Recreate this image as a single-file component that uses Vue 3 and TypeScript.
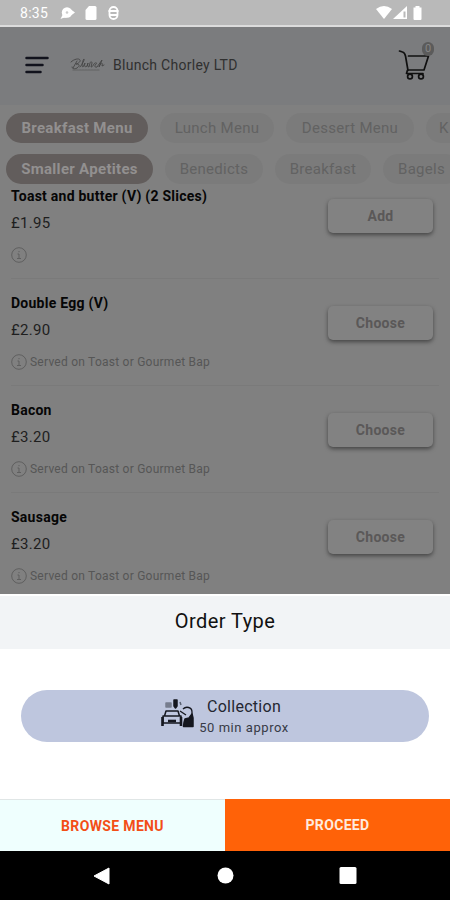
<script setup lang="ts">
interface Chip { label: string; width: number; active?: boolean; start?: boolean }
interface MenuItem { name: string; price: string; note: string; action: string }

const menus: Chip[] = [
  { label: 'Breakfast Menu', width: 142, active: true },
  { label: 'Lunch Menu', width: 114 },
  { label: 'Dessert Menu', width: 128 },
  { label: 'K', width: 108, start: true },
]
const categories: Chip[] = [
  { label: 'Smaller Apetites', width: 147, active: true },
  { label: 'Benedicts', width: 98 },
  { label: 'Breakfast', width: 96 },
  { label: 'Bagels', width: 77 },
]
const items: MenuItem[] = [
  { name: 'Toast and butter (V) (2 Slices)', price: '£1.95', note: '', action: 'Add' },
  { name: 'Double Egg (V)', price: '£2.90', note: 'Served on Toast or Gourmet Bap', action: 'Choose' },
  { name: 'Bacon', price: '£3.20', note: 'Served on Toast or Gourmet Bap', action: 'Choose' },
  { name: 'Sausage', price: '£3.20', note: 'Served on Toast or Gourmet Bap', action: 'Choose' },
]
</script>

<template>
  <div class="phone">
    <div class="status">
      <span class="time">8:35</span>
      <svg class="status-left" width="62" height="16" viewBox="0 0 62 16" fill="#fff">
        <circle cx="7" cy="7.500" r="5.200" /><path d="M.5 14l2.500-5 4 3.500-4 .5zM11 4.500l4 3-4 3z" />
        <circle cx="7" cy="7.500" r="1.300" fill="#ccc" />
        <path d="M29 1h6a1.500 1.500 0 0 1 1.500 1.500v11a1.500 1.500 0 0 1-1.500 1.500h-8a1.500 1.500 0 0 1-1.500-1.500V5z" />
        <g fill="none" stroke="#fff" stroke-width="1.800"><rect x="49.500" y="2" width="8" height="12" rx="4" /><path d="M48.500 6h10M49.500 10h8" /></g>
      </svg>
      <svg class="status-right" width="48" height="16" viewBox="0 0 48 16" fill="#fff">
        <path d="M0 4Q8-2 16 4L8 14z" /><path d="M31 1v13H17z" /><path d="M27.500 6.500h2v6h-2z" fill="#b9b9b9" />
        <path d="M39.500 1h4v1.500h2V14a1 1 0 0 1-1 1h-6a1 1 0 0 1-1-1V2.500h2z" />
      </svg>
    </div>

    <header class="header">
      <svg class="burger" width="24" height="18" viewBox="0 0 24 18">
        <path d="M1.500 2h21M1.500 9h16M1.500 16h14" stroke="#11121c" stroke-width="2.500" stroke-linecap="round" />
      </svg>
      <svg class="logo" width="36" height="16" viewBox="0 0 36 16" fill="none" stroke="#454545" stroke-width=".9" stroke-linecap="round">
        <path d="M2 5C5 2 10 1 11 3s-3 4-4 4c4 0 4 2 1 4s-5 0-5-1M8 4L4 11M11 10c2-2 5-8 4-8s-3 8-1 8l2-4c-1 3 0 5 2 3l1-3c-1 3 0 4 1 4l1-4c0-1 2-2 2 0l-1 4c1 0 2-1 3-3 1-2 4-1 2 0-2 2-1 4 1 3l5-7-3 7c2-5 4-5 3-1l2-1" />
        <path d="M4 13h27" stroke-dasharray="2 1" stroke-width="1.200" stroke="#626262" />
      </svg>
      <span class="shop">Blunch Chorley LTD</span>
      <div class="cart">
        <svg width="34" height="34" viewBox="0 0 34 34" fill="none" stroke="#101010" stroke-width="1.700" stroke-linecap="round" stroke-linejoin="round">
          <path d="M1.500 3l3 1c2 .5 2.500 2 3 4L10 22.500M10.500 8H30.500l-4.500 14H9.500L8.500 25.500H25" />
          <circle cx="12" cy="28.500" r="2.400" /><circle cx="23" cy="28.500" r="2.400" />
        </svg>
        <span class="badge">0</span>
      </div>
    </header>

    <main class="content">
      <nav class="chips">
        <span v-for="c in menus" :key="c.label" class="chip" :class="{ active: c.active, start: c.start }" :style="{ width: c.width + 'px' }">{{ c.label }}</span>
      </nav>
      <nav class="chips second">
        <span v-for="c in categories" :key="c.label" class="chip" :class="{ active: c.active }" :style="{ width: c.width + 'px' }">{{ c.label }}</span>
      </nav>
      <section class="list">
        <article v-for="item in items" :key="item.name" class="item">
          <div class="info">
            <h3>{{ item.name }}</h3>
            <div class="price">{{ item.price }}</div>
            <div class="note">
              <svg width="16" height="16" viewBox="0 0 16 16" fill="none" stroke="#5f5f5f">
                <circle cx="8" cy="8" r="7.300" /><path d="M6.500 7H8v4.500M6 11.500h4M8 4v1.200" />
              </svg>
              <span>{{ item.note }}</span>
            </div>
          </div>
          <button class="action">{{ item.action }}</button>
        </article>
      </section>
    </main>

    <section class="sheet">
      <h2>Order Type</h2>
      <div class="options">
        <button class="option">
          <svg width="34" height="32" viewBox="0 0 34 32" fill="none" stroke="#15171f" stroke-width="1.500" stroke-linejoin="round">
            <path d="M3.500 18l1.500-5h12l1.500 5M2 18h18v7H2z" />
            <path d="M1.500 19v9M20 19v9" stroke-width="2.600" />
            <path d="M7 23h8" stroke-width="2.600" />
            <path d="M5 5h5v4H5z" fill="#777d8e" stroke="#777d8e" />
            <path d="M13 2h3v6l-1.500 2L13 8z" fill="#15171f" /><path d="M19 4l1 3" stroke="#596071" />
            <path d="M19 13l6 4M22 11c3-3 9-2 9 3v14" stroke-width="1.300" />
            <path d="M24 21l4-1 3-4 1 4v8.500h-9.500l.5-4z" fill="#15171f" />
          </svg>
          <span class="option-text"><span class="kind">Collection</span><span class="eta">50 min approx</span></span>
        </button>
      </div>
      <div class="buttons">
        <button class="browse">BROWSE MENU</button>
        <button class="proceed">PROCEED</button>
      </div>
    </section>

    <footer class="system-nav">
      <svg width="18" height="20" viewBox="0 0 18 20"><path d="M16 2v16L1 10z" fill="#fff" stroke="#fff" stroke-linejoin="round" /></svg>
      <svg width="18" height="20" viewBox="0 0 18 20"><circle cx="9.500" cy="9.500" r="8" fill="#fff" /></svg>
      <svg width="18" height="20" viewBox="0 0 18 20"><rect x=".5" y="1" width="17" height="17" rx="1.500" fill="#fff" /></svg>
    </footer>
  </div>
</template>

<style>
body { margin: 0; overflow: hidden; }
</style>

<style scoped>
* { box-sizing: border-box; }
.phone { width: 450px; height: 900px; display: flex; flex-direction: column; overflow: hidden; background: #808080; font-family: Roboto, "Liberation Sans", sans-serif; }
button { border: 0; padding: 0; font-family: inherit; }
.status { height: 27px; flex: none; display: flex; align-items: center; padding: 0 26px 0 20px; background: #b9b9b9; border-bottom: 2px solid #dcdcdc; color: #fff; }
.time { width: 40px; font-size: 14px; letter-spacing: .3px; }
.status-right { margin-left: auto; }
.header { height: 78px; flex: none; display: flex; align-items: center; padding: 0 18px 2px 25px; background: #7b7c7e; }
.burger { flex: none; }
.logo { flex: none; margin-left: 20px; }
.shop { margin-left: 8px; color: #303030; font-size: 14px; letter-spacing: .28px; line-height: 20px; }
.cart { position: relative; width: 34px; height: 34px; margin-left: auto; }
.cart svg { display: block; }
.badge { position: absolute; left: 24px; top: -6px; width: 12px; height: 14px; border-radius: 7px; background: #5b5b5b; color: #858585; font-size: 11px; line-height: 14px; text-align: center; }
.content { height: 489px; flex: none; overflow: hidden; padding-top: 8px; }
.chips { display: flex; gap: 12px; padding-left: 6px; height: 30px; overflow: hidden; }
.second { margin-top: 11px; }
.chip { flex: none; display: flex; align-items: center; justify-content: center; height: 30px; border-radius: 15px; background: #7b7b7b; color: #626262; font-size: 15px; letter-spacing: .28px; white-space: nowrap; }
.chip.active { background: #625d5c; color: #929090; font-weight: 700; letter-spacing: .3px; }
.chip.start { justify-content: flex-start; padding-left: 13px; letter-spacing: 0; }
.list { margin: -12px 11px 0; }
.item { height: 107px; display: flex; justify-content: space-between; border-bottom: 1px solid #7a7a7a; padding: 14px 6px 0 0; }
h3 { margin: 0; font-size: 14px; line-height: 20px; font-weight: 700; letter-spacing: .25px; color: #060606; }
.price { margin-top: 7px; font-size: 15px; line-height: 20px; letter-spacing: .3px; color: #1e1e1e; }
.note { margin-top: 12px; height: 20px; display: flex; align-items: center; gap: 3px; font-size: 12px; letter-spacing: .24px; color: #565656; }
.action { width: 105px; height: 34px; margin-top: 13px; border-radius: 5px; background: #828282; color: #5a5858; font-size: 14px; font-weight: 700; letter-spacing: .3px; box-shadow: 0 2px 4px #454545; }
.sheet { height: 257px; flex: none; display: flex; flex-direction: column; background: #fff; }
h2 { margin: 0; height: 55px; background: #f2f4f6; border-top: 2px solid #fff; color: #111; font-size: 20px; line-height: 50px; font-weight: 400; letter-spacing: .45px; text-align: center; }
.options { height: 150px; padding: 41px 21px 0; }
.option { width: 408px; height: 52px; border-radius: 26px; background: #bec6de; display: flex; align-items: center; justify-content: center; gap: 4px; color: #242731; }
.option svg { margin-top: -4px; }
.option-text { display: flex; flex-direction: column; align-items: center; padding-top: 1px; }
.kind { font-size: 16px; line-height: 22px; letter-spacing: .28px; }
.eta { font-size: 13px; line-height: 20px; letter-spacing: .55px; color: #373a46; }
.buttons { flex: 1; display: grid; grid-template-columns: 1fr 1fr; }
.buttons button { font-size: 14px; font-weight: 700; letter-spacing: .35px; }
.browse { background: #effffe; color: #f34e16; border-top: 1px solid #e0e6e6; }
.proceed { background: #ff6208; color: #ffeadf; }
.system-nav { flex: 1; display: flex; align-items: center; justify-content: center; gap: 105px; background: #000; }
</style>
